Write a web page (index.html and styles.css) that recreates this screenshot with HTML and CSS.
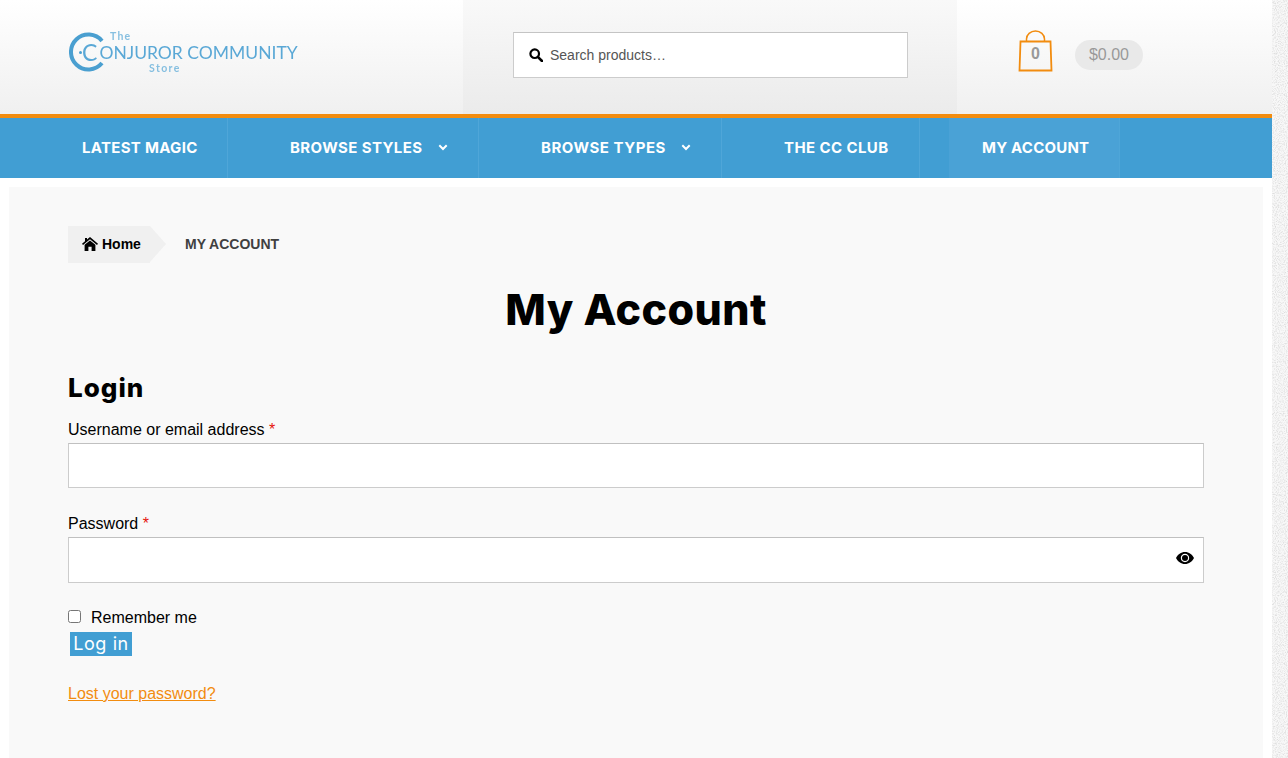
FILE: index.html
```html
<!DOCTYPE html>
<html lang="en">
<head>
    <meta charset="UTF-8">
    <meta name="viewport" content="width=device-width, initial-scale=1.0">
    <title>My Account</title>
    <link rel="stylesheet" href="styles.css">
</head>
<body>

    <!-- Textura del fondo -->
    <svg class="texture" width="16" height="758">
        <filter id="speckle">
            <feTurbulence type="fractalNoise" baseFrequency="0.7" numOctaves="2" seed="4"/>
            <feColorMatrix type="matrix" values="0 0 0 0 0.94  0 0 0 0 0.94  0 0 0 0 0.94  0 0 0 0 1"/>
        </filter>
        <filter id="speckle-dark">
            <feTurbulence type="fractalNoise" baseFrequency="0.9" numOctaves="2" seed="9"/>
            <feColorMatrix type="matrix" values="0 0 0 0 0.72  0 0 0 0 0.72  0 0 0 0 0.72  2.400 0 0 0 -1"/>
        </filter>
        <rect width="16" height="758" filter="url(#speckle)"/>
        <rect width="16" height="758" filter="url(#speckle-dark)"/>
    </svg>

    <div class="site">
        <header class="header">
            <div class="header-logo">
                <!-- Logo -->
                <a href="#" class="logo">
                    <svg class="logo-ring" width="36" height="42" viewBox="0 0 36 42">
                        <path d="M33 9.900A17.500 17.500 0 1 0 33 32.100" fill="none" stroke="#4a9fd0" stroke-width="4"/>
                    </svg>
                    <span class="logo-the">The</span>
                    <span class="logo-name"><span class="logo-dot"></span><span class="logo-cap">C</span>ONJUROR COMMUNITY</span>
                    <span class="logo-store">Store</span>
                </a>
            </div>
            <div class="header-search">
                <form class="search">
                    <svg class="search-icon" width="14" height="14" viewBox="0 0 14 14">
                        <circle cx="5.7" cy="5.7" r="4.3" fill="none" stroke="#000" stroke-width="2.2"/>
                        <path d="M8.8 8.8L13 13" stroke="#000" stroke-width="2.6" stroke-linecap="round"/>
                    </svg>
                    <span class="search-text">Search products…</span>
                </form>
            </div>
            <div class="header-cart">
                <!-- Bolsa -->
                <div class="bag">
                    <svg width="35" height="42" viewBox="0 0 35 42">
                        <path d="M8.500 12V9a9 8 0 0 1 18 0v3" fill="none" stroke="#f28c0f" stroke-width="1.500"/>
                        <path d="M2.500 11.500H32.500L33.500 40.500H1.500Z" fill="none" stroke="#f28c0f" stroke-width="1.800"/>
                    </svg>
                    <span class="bag-count">0</span>
                </div>
                <span class="price">$0.00</span>
            </div>
        </header>

        <nav class="nav">
            <a href="#" class="nav-item">LATEST MAGIC</a>
            <a href="#" class="nav-item">BROWSE STYLES
                <svg class="chevron" width="10" height="7" viewBox="0 0 10 7"><path d="M1.300 1.300L5 5L8.700 1.300" fill="none" stroke="#fff" stroke-width="2"/></svg>
            </a>
            <a href="#" class="nav-item">BROWSE TYPES
                <svg class="chevron" width="10" height="7" viewBox="0 0 10 7"><path d="M1.300 1.300L5 5L8.700 1.300" fill="none" stroke="#fff" stroke-width="2"/></svg>
            </a>
            <a href="#" class="nav-item">THE CC CLUB</a>
            <a href="#" class="nav-item active">MY ACCOUNT</a>
        </nav>

        <main class="main">
            <div class="breadcrumb">
                <a href="#" class="crumb-home">
                    <svg width="16" height="14" viewBox="0 0 16 14">
                        <path d="M8 0L16 6.800L15 8L8 2.200L1 8L0 6.800L3 4.300V1H5V2.600Z" fill="#000"/>
                        <path d="M8 3.400L13.400 7.800V14H9.600V9.800H6.400V14H2.600V7.800Z" fill="#000"/>
                    </svg>
                    Home
                </a>
                <span class="crumb-current">MY ACCOUNT</span>
            </div>

            <h1 class="title">My Account</h1>
            <h2 class="subtitle">Login</h2>

            <form>
                <label class="label">Username or email address <span class="required">*</span></label>
                <input class="input" type="text">

                <label class="label label-password">Password <span class="required">*</span></label>
                <div class="password">
                    <input class="input input-tall" type="password">
                    <svg class="eye" width="18" height="12" viewBox="0 0 18 12">
                        <path fill-rule="evenodd" d="M9 0C5 0 1.800 2.400 0 6c1.800 3.600 5 6 9 6s7.200-2.400 9-6c-1.800-3.600-5-6-9-6ZM9 1.800C11.300 1.800 13.200 3.700 13.200 6S11.300 10.200 9 10.200 4.800 8.300 4.800 6 6.700 1.800 9 1.800Z" fill="#000"/>
                        <circle cx="9" cy="6" r="3" fill="#000"/>
                    </svg>
                </div>

                <label class="remember"><input class="check" type="checkbox"> Remember me</label>
                <button class="login-btn" type="button">Log in</button>
                <a href="#" class="lost">Lost your password?</a>
            </form>
        </main>
    </div>

</body>
</html>
```

FILE: styles.css
```css
html, body {
    height: 100%;
}

body {
    margin: 0;
    padding: 0;
    overflow: hidden;
    font-family: "Liberation Sans", Arial, sans-serif;
    color: #000;
    background-color: #ececec;
}

.texture {
    position: fixed;
    right: 0;
    top: 0;
}

.site {
    width: 1272px;
    height: 758px;
    background-color: #ffffff;
}

/* Cabecera */
.header {
    display: flex;
    height: 114px;
    background: linear-gradient(#ffffff, #f0f0f0);
}

.header-logo {
    width: 463px;
    box-sizing: border-box;
    padding: 30px 0 0 69px;
}

.logo {
    position: relative;
    display: block;
    width: 240px;
    height: 46px;
    color: #5aa8d6;
    text-decoration: none;
    font-family: Lato, sans-serif;
    filter: blur(0.3px);
}

.logo-ring {
    position: absolute;
    left: 0;
    top: 1px;
}

.logo-the {
    display: block;
    margin-left: 41px;
    height: 12px;
    font-size: 10.5px;
    line-height: 12px;
    font-weight: 700;
    letter-spacing: 1.2px;
    color: #86bfe0;
}

.logo-name {
    display: flex;
    align-items: center;
    height: 21px;
    margin-left: 10px;
    font-size: 17.5px;
    line-height: 21px;
    white-space: nowrap;
}

.logo-dot {
    width: 3px;
    height: 3px;
    border-radius: 50%;
    background-color: #4a9fd0;
}

.logo-cap {
    margin-right: 2px;
    font-size: 23px;
}

.logo-store {
    display: block;
    margin: -1px 0 0 80px;
    font-size: 10.5px;
    line-height: 12px;
    font-weight: 700;
    letter-spacing: 1.4px;
    color: #86bfe0;
}

.header-search {
    width: 494px;
    box-sizing: border-box;
    padding: 32px 0 0 50px;
    background: linear-gradient(#f9f9f9, #ebebeb);
}

.search {
    display: flex;
    align-items: center;
    gap: 7px;
    width: 395px;
    height: 46px;
    box-sizing: border-box;
    margin: 0;
    padding-left: 15px;
    background-color: #ffffff;
    border: 1px solid #cccccc;
    border-top-color: #c4c4c4;
}

.search-text {
    font-size: 14px;
    color: #555555;
}

.header-cart {
    flex: 1;
    display: flex;
    align-items: flex-start;
    padding: 30px 0 0 61px;
}

.bag {
    position: relative;
    width: 35px;
    height: 42px;
}

.bag-count {
    position: absolute;
    left: 0;
    right: 0;
    top: 14px;
    text-align: center;
    font-size: 16px;
    line-height: 20px;
    font-weight: 700;
    color: #999999;
}

.price {
    margin: 10px 0 0 22px;
    width: 68px;
    height: 30px;
    border-radius: 15px;
    background-color: #e9e9e9;
    text-align: center;
    font-size: 16px;
    line-height: 30px;
    color: #999999;
}

/* Menu */
.nav {
    display: flex;
    height: 60px;
    padding-left: 49px;
    background-color: #419ed3;
    border-top: 4px solid #f28c0f;
}

.nav-item {
    display: flex;
    align-items: center;
    box-sizing: border-box;
    padding: 0 30px 2px 33px;
    margin-right: 29px;
    color: #ffffff;
    font-family: Inter, sans-serif;
    font-size: 15px;
    font-weight: 700;
    letter-spacing: 0.4px;
    white-space: nowrap;
    text-decoration: none;
    border-right: 1px solid #4fa6d8;
}

.nav-item:nth-child(1) {
    width: 179px;
    letter-spacing: 0.3px;
}

.nav-item:nth-child(2) {
    width: 222px;
}

.nav-item:nth-child(3) {
    width: 214px;
    letter-spacing: 0.52px;
}

.nav-item:nth-child(4) {
    width: 169px;
}

.nav-item:nth-child(5) {
    width: 171px;
    letter-spacing: 0.2px;
}

.nav-item.active {
    background-color: #4aa2d6;
}

.chevron {
    flex: none;
    margin-left: auto;
}

/* Contenido */
.main {
    height: 571px;
    box-sizing: border-box;
    margin: 9px 9px 0;
    padding: 39px 59px 0;
    background-color: #f9f9f9;
}

.breadcrumb {
    display: flex;
    align-items: center;
    height: 37px;
    font-size: 14px;
    font-weight: 700;
}

.crumb-home {
    position: relative;
    display: flex;
    align-items: center;
    gap: 4px;
    width: 82px;
    height: 37px;
    box-sizing: border-box;
    padding: 0 0 2px 14px;
    color: #000;
    text-decoration: none;
    background-color: #f0f0f0;
}

.crumb-home::after {
    content: "";
    position: absolute;
    left: 100%;
    top: 0;
    border-left: 16px solid #f0f0f0;
    border-top: 18.5px solid transparent;
    border-bottom: 18.5px solid transparent;
}

.crumb-current {
    margin: 0 0 2px 35px;
    color: #404040;
}

.title {
    margin: 21px 0 0;
    text-align: center;
    font-family: Inter, sans-serif;
    font-size: 43px;
    line-height: 50px;
    font-weight: 800;
    letter-spacing: 0.4px;
}

.subtitle {
    margin: 38px 0 0;
    font-family: Inter, sans-serif;
    font-size: 26px;
    line-height: 32px;
    font-weight: 800;
    letter-spacing: 1px;
}

form {
    margin: 0;
}

.label {
    display: block;
    margin-top: 16px;
    font-size: 16px;
    line-height: 20px;
}

.label-password {
    margin-top: 26px;
}

.required {
    color: #e6140c;
}

.input {
    display: block;
    width: 100%;
    height: 45px;
    box-sizing: border-box;
    margin: 3px 0 0;
    padding: 0 10px;
    background-color: #ffffff;
    border: 1px solid #cccccc;
    border-top-color: #c0c0c0;
    border-radius: 0;
    outline: none;
}

.input-tall {
    height: 46px;
}

.password {
    position: relative;
}

.eye {
    position: absolute;
    right: 10px;
    top: 15px;
}

.remember {
    display: flex;
    align-items: center;
    gap: 10px;
    margin-top: 25px;
    font-size: 16px;
    line-height: 20px;
}

.check {
    width: 13px;
    height: 13px;
    margin: 0 0 3px;
}

.login-btn {
    display: block;
    width: 62px;
    height: 24px;
    margin: 4px 0 0 2px;
    padding: 0;
    border: none;
    background-color: #419ed3;
    color: #ffffff;
    font-family: Inter, sans-serif;
    font-size: 18px;
    line-height: 24px;
    letter-spacing: 0.6px;
    cursor: pointer;
}

.lost {
    display: block;
    width: max-content;
    margin-top: 28px;
    font-size: 16px;
    line-height: 20px;
    color: #f28c0f;
}
```
